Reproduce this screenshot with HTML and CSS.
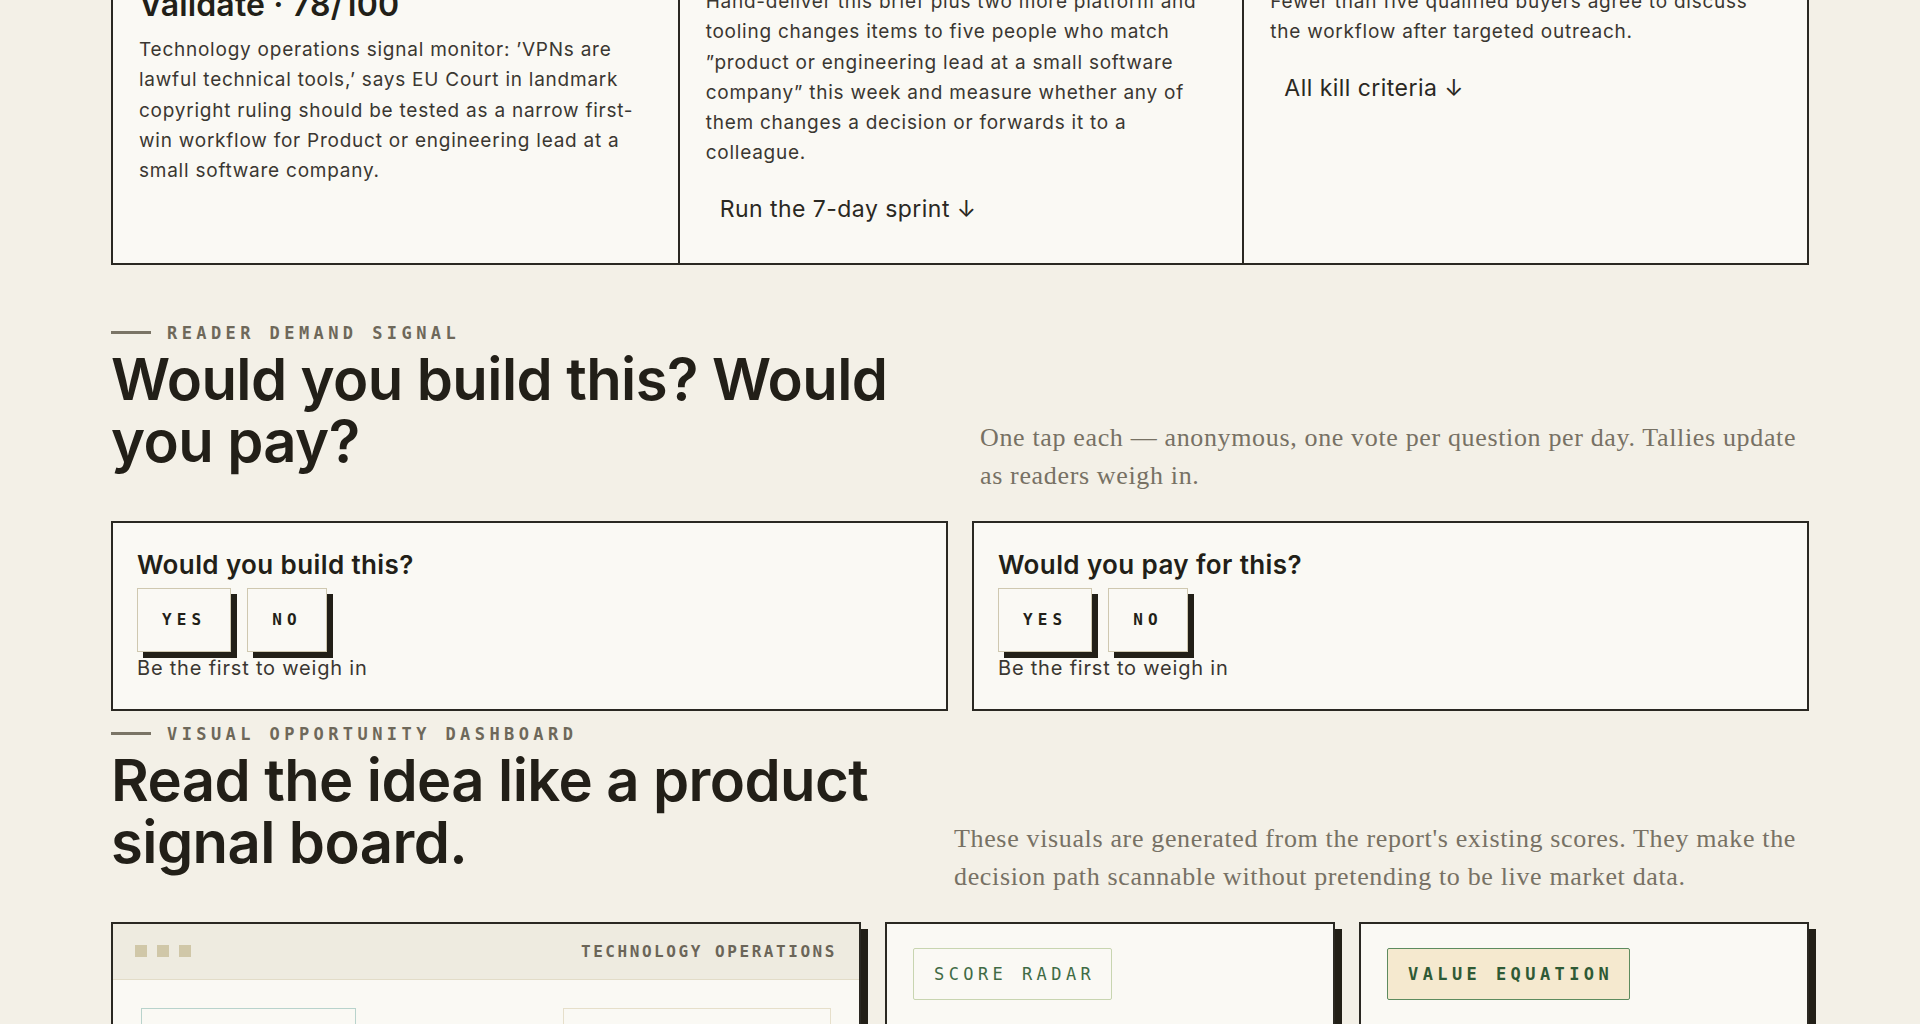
FILE: index.html
```html
<!DOCTYPE html>
<html lang="en">
<head>
    <meta charset="UTF-8">
    <title>Idea brief · Technology operations</title>
    <link rel="stylesheet" href="styles.css">
</head>
<body>
<main class="page">

    <section class="brief">
        <article class="brief-card">
            <p class="card-label">Verdict</p>
            <h3 class="verdict">Validate · 78/100</h3>
            <p class="card-text">Technology operations signal monitor: ’VPNs are lawful technical tools,’ says EU Court in landmark copyright ruling should be tested as a narrow first-win workflow for Product or engineering lead at a small software company.</p>
        </article>
        <article class="brief-card">
            <p class="card-label">First move</p>
            <p class="card-text">Hand-deliver this brief plus two more platform and tooling changes items to five people who match ”product or engineering lead at a small software company” this week and measure whether any of them changes a decision or forwards it to a colleague.</p>
            <a class="card-link" href="#sprint">Run the 7-day sprint ↓</a>
        </article>
        <article class="brief-card">
            <p class="card-label">Kill it if</p>
            <p class="card-text">Fewer than five qualified buyers agree to discuss the workflow after targeted outreach.</p>
            <a class="card-link" href="#kill">All kill criteria ↓</a>
        </article>
    </section>

    <section class="block demand">
        <div class="section-head">
            <div>
                <p class="eyebrow">Reader demand signal</p>
                <h2>Would you build this? Would you pay?</h2>
            </div>
            <p class="lede">One tap each — anonymous, one vote per question per day. Tallies update as readers weigh in.</p>
        </div>
        <div class="votes">
            <div class="vote-card">
                <h3>Would you build this?</h3>
                <div class="vote-buttons">
                    <button class="vote-btn">Yes</button>
                    <button class="vote-btn">No</button>
                </div>
                <p class="vote-tally">Be the first to weigh in</p>
            </div>
            <div class="vote-card">
                <h3>Would you pay for this?</h3>
                <div class="vote-buttons">
                    <button class="vote-btn">Yes</button>
                    <button class="vote-btn">No</button>
                </div>
                <p class="vote-tally">Be the first to weigh in</p>
            </div>
        </div>
    </section>

    <section class="block dashboard">
        <div class="section-head">
            <div>
                <p class="eyebrow">Visual opportunity dashboard</p>
                <h2>Read the idea like a product signal board.</h2>
            </div>
            <p class="lede lede-wide">These visuals are generated from the report's existing scores. They make the decision path scannable without pretending to be live market data.</p>
        </div>
        <div class="boards">
            <div class="board board-main">
                <div class="board-bar">
                    <div class="dots"><span></span><span></span><span></span></div>
                    <span class="board-title">Technology operations</span>
                </div>
                <div class="board-body">
                    <div class="tile tile-teal">
                        <span class="tile-label">Opportunity</span>
                        <strong>78</strong>
                    </div>
                    <div class="tile tile-sand">
                        <span class="tile-label">Time to first win</span>
                        <strong>7 days</strong>
                    </div>
                </div>
            </div>
            <div class="board">
                <span class="pill">Score radar</span>
            </div>
            <div class="board">
                <span class="pill pill-strong">Value equation</span>
            </div>
        </div>
    </section>

</main>
</body>
</html>
```

FILE: styles.css
```css
* {
    box-sizing: border-box;
}

body {
    margin: 0;
    background-color: #f3f0e7;
    color: #221f18;
    font-family: Inter, "Noto Sans", sans-serif;
}

.page {
    max-width: 1698px;
    margin: 0 auto;
}

/* brief cards (page is scrolled past their top) */

.brief {
    display: grid;
    grid-template-columns: repeat(3, 1fr);
    margin-top: -73px;
    border: 2px solid #2a2822;
    background-color: #faf9f4;
}

.brief-card {
    padding: 26px 26px 27px;
    border-left: 2px solid #2a2822;
}

.brief-card:first-child {
    border-left: 0;
}

.card-label {
    margin: 0 0 14px;
    font-family: "DejaVu Sans Mono", monospace;
    font-size: 14px;
    line-height: 18px;
    letter-spacing: 0.2em;
    text-transform: uppercase;
    color: #6e685a;
}

.verdict {
    margin: 0 0 12px;
    font-size: 32px;
    line-height: 36px;
    font-weight: 600;
    letter-spacing: 0.005em;
}

.card-text {
    margin: 0;
    font-size: 19px;
    line-height: 30.3px;
    letter-spacing: 0.04em;
    color: #3a3731;
}

.card-link {
    display: inline-block;
    margin-top: 13px;
    padding: 12px 14px;
    font-size: 23px;
    line-height: 30px;
    letter-spacing: 0.02em;
    color: #2a2822;
    text-decoration: none;
}

/* section heads */

.demand {
    margin-top: 58px;
}

.dashboard {
    margin-top: 13px;
}

.section-head {
    display: flex;
    justify-content: space-between;
    align-items: flex-end;
    margin-bottom: 26px;
}

.eyebrow {
    display: flex;
    align-items: center;
    gap: 16px;
    margin: 0 0 5px;
    font-family: "DejaVu Sans Mono", monospace;
    font-size: 17px;
    line-height: 20px;
    font-weight: 600;
    letter-spacing: 0.26em;
    text-transform: uppercase;
    color: #6e685a;
}

.eyebrow::before {
    content: "";
    width: 40px;
    height: 3px;
    background-color: #7a7466;
}

.section-head h2 {
    margin: 0 0 23px;
    font-size: 58px;
    line-height: 62px;
    font-weight: 600;
    letter-spacing: -0.01em;
}

.lede {
    flex: 0 0 auto;
    width: 829px;
    margin: 0;
    font-family: "Liberation Serif", serif;
    font-size: 26px;
    line-height: 38px;
    letter-spacing: 0.025em;
    color: #777164;
}

.lede-wide {
    width: 855px;
}

/* votes */

.votes {
    display: grid;
    grid-template-columns: 1fr 1fr;
    gap: 24px;
}

.vote-card {
    padding: 27px 24px 29px;
    border: 2px solid #2a2822;
    background-color: #faf9f4;
}

.vote-card h3 {
    margin: 0 0 8px;
    font-size: 26px;
    line-height: 30px;
    font-weight: 600;
    letter-spacing: 0.015em;
}

.vote-buttons {
    display: flex;
    gap: 16px;
}

.vote-btn {
    padding: 21px 24px;
    border: 1.5px solid #cfc8b0;
    background-color: #faf9f4;
    box-shadow: 6px 6px 0 #221f17;
    font-family: "DejaVu Sans Mono", monospace;
    font-size: 16px;
    line-height: 20px;
    font-weight: 700;
    letter-spacing: 0.32em;
    text-transform: uppercase;
    color: #221f18;
}

.vote-tally {
    margin: 4px 0 0;
    font-size: 20px;
    line-height: 24px;
    letter-spacing: 0.04em;
    color: #3a3731;
}

/* dashboard */

.boards {
    display: grid;
    grid-template-columns: 5fr 3fr 3fr;
    gap: 24px;
}

.board {
    min-height: 320px;
    padding: 24px 26px;
    border: 2px solid #2a2822;
    background-color: #faf9f4;
    box-shadow: 7px 7px 0 #221f17;
}

.board-main {
    padding: 0;
}

.board-bar {
    display: flex;
    justify-content: space-between;
    align-items: center;
    height: 56px;
    padding: 0 22px;
    background-color: #eeebe0;
    border-bottom: 1.5px solid #e2dcc8;
}

.dots {
    display: flex;
    gap: 10px;
}

.dots span {
    width: 12px;
    height: 12px;
    background-color: #d0c7a8;
}

.board-title {
    font-family: "DejaVu Sans Mono", monospace;
    font-size: 16px;
    font-weight: 700;
    letter-spacing: 0.16em;
    text-transform: uppercase;
    color: #6b6558;
}

.board-body {
    display: flex;
    justify-content: space-between;
    padding: 28px;
}

.tile {
    display: flex;
    flex-direction: column;
    gap: 8px;
    height: 150px;
    padding: 28px 18px 18px;
    border: 1.5px solid #e6dfca;
}

.tile-teal {
    width: 215px;
    border-color: #b8d3cc;
}

.tile-sand {
    width: 268px;
}

.tile-label {
    font-family: "DejaVu Sans Mono", monospace;
    font-size: 13px;
    text-transform: uppercase;
    letter-spacing: 0.2em;
    color: #6e685a;
}

.tile strong {
    font-size: 40px;
}

.pill {
    display: inline-block;
    padding: 15px 16px 15px 20px;
    border: 1.5px solid #c8d5b0;
    border-radius: 2px;
    font-family: "DejaVu Sans Mono", monospace;
    font-size: 17px;
    line-height: 20px;
    letter-spacing: 0.26em;
    text-transform: uppercase;
    color: #3f6b45;
}

.pill-strong {
    border-color: #5d8b5e;
    background-color: #f5e9cf;
    font-weight: 700;
    color: #2f5a35;
}
```
